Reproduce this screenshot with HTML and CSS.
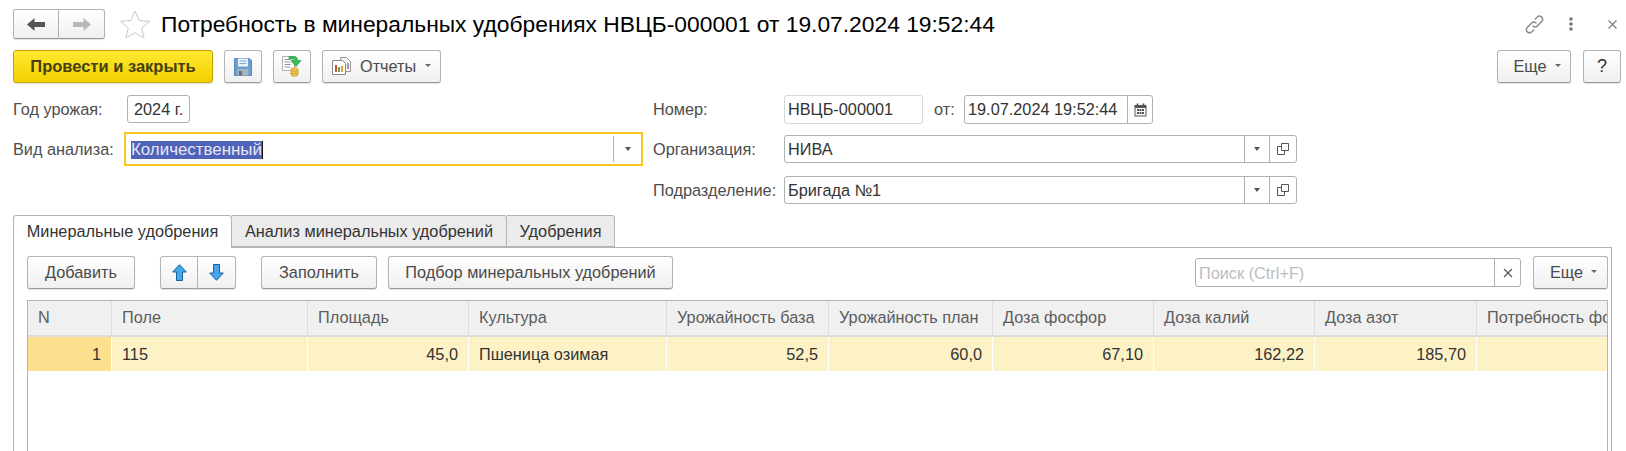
FILE: index.html
```html
<!DOCTYPE html>
<html lang="ru">
<head>
<meta charset="utf-8">
<title>Потребность в минеральных удобрениях</title>
<link rel="stylesheet" href="styles.css">
</head>
<body>
<div class="page">
  <header class="titlebar">
    <div class="btn-group nav">
      <button class="btn seg"><svg width="18" height="13" viewBox="0 0 18 13"><path d="M0 6.500L7.500 0v4H18v5H7.500v4z" fill="#555"/></svg></button>
      <button class="btn seg"><svg width="18" height="13" viewBox="0 0 18 13"><path d="M18 6.500L10.500 0v4H0v5h10.500v4z" fill="#b8b8b8"/></svg></button>
    </div>
    <svg class="star" width="30" height="28" viewBox="0 0 30 28"><path d="M15 1l4.200 9.500 10.300 .9-7.800 6.700 2.400 9.900L15 22.800 5.900 28l2.400-9.900L.5 11.400l10.300-.9z" fill="#fff" stroke="#c8c8c8"/></svg>
    <h1 class="title">Потребность в минеральных удобрениях НВЦБ-000001 от 19.07.2024 19:52:44</h1>
    <div class="win-tools">
      <svg class="tool-link" width="19" height="19" viewBox="0 0 19 19"><g fill="none" stroke="#8a8a8a" stroke-width="1.500" stroke-linecap="round"><path d="M8 11c1.500 1.500 3.200 1.200 4.300 0l4.200-4.200c1.600-1.600 1.500-3.500.2-4.700-1.300-1.200-3.200-1.300-4.600 .1L10.300 4"/><path d="M11 8c-1.500-1.500-3.200-1.200-4.300 0l-4.200 4.200c-1.600 1.600-1.500 3.500-.2 4.700 1.300 1.200 3.200 1.300 4.600-.1L8.700 15"/></g></svg>
      <svg class="tool-dots" width="4" height="14" viewBox="0 0 4 14"><g fill="#777"><circle cx="2" cy="2" r="1.800"/><circle cx="2" cy="7" r="1.800"/><circle cx="2" cy="12" r="1.800"/></g></svg>
      <svg class="tool-x" width="9" height="9" viewBox="0 0 9 9"><path d="M.5 .5l8 8M8.500 .5l-8 8" stroke="#808080" stroke-width="1.300"/></svg>
    </div>
  </header>

  <div class="cmdbar">
    <button class="btn primary">Провести и закрыть</button>
    <button class="btn icon"><svg width="18" height="18" viewBox="0 0 18 18"><path d="M.5 .5h15l2 2v15H.5z" fill="#6d9fd3" stroke="#5a88b8"/><rect x="4" y=".5" width="10" height="8" fill="#eaf2fa"/><path d="M5.500 3h7M5.500 5.500h7" stroke="#86a8cc"/><rect x="3.500" y="11" width="11" height="6.500" fill="#aab4bf"/><rect x="5" y="13" width="3" height="4.500" fill="#5f6f80"/></svg></button>
    <button class="btn icon"><svg width="20" height="21" viewBox="0 0 20 21"><path d="M.5 .5h10l2 2v12H.5z" fill="#fff" stroke="#b0b0b0"/><path d="M2.500 3.500h6M2.500 6h6M2.500 8.500h6M2.500 11h6" stroke="#8c9aa8"/><rect x="9" y="12" width="7" height="8" rx="2" fill="#efc84e" stroke="#cfa42e"/><path d="M9 15h7M9 17.500h7" stroke="#cfa42e"/><path d="M7 .5h5c2.500 0 3.500 1.500 3.500 4H19l-5 6-5-6h3.500c0-1-.5-1.500-1.500-1.500H7z" fill="#36c05a" stroke="#239a42" stroke-width=".7"/></svg></button>
    <button class="btn reports"><svg width="19" height="18" viewBox="0 0 19 18"><path d="M8.500 .5h6l4 4v10h-10z" fill="#f0f0f0" stroke="#9a9a9a"/><path d="M.5 3.500h10l3 3v11H.5z" fill="#fff" stroke="#8a8a8a"/><rect x="3" y="8" width="2" height="7" fill="#d64a3c"/><rect x="6" y="10" width="2" height="5" fill="#55a850"/><rect x="9" y="9" width="2" height="6" fill="#e0a030"/><rect x="15" y="6" width="2" height="6" fill="#a0a0a0"/></svg><span>Отчеты</span><i class="caret"></i></button>
    <div class="cmd-right">
      <button class="btn more">Еще<i class="caret"></i></button>
      <button class="btn help">?</button>
    </div>
  </div>

  <section class="form">
    <div class="col-left">
      <div class="row row-year">
        <label class="lbl lbl-left">Год урожая:</label>
        <div class="field year">2024 г.</div>
      </div>
      <div class="row row-kind">
        <label class="lbl lbl-left">Вид анализа:</label>
        <div class="field focus"><span class="val"><span class="sel">Количественный</span></span><span class="fbtn"><i class="caret dark"></i></span></div>
      </div>
    </div>
    <div class="col-right">
      <div class="row row-num">
        <label class="lbl lbl-right">Номер:</label>
        <div class="field number">НВЦБ-000001</div>
        <label class="lbl lbl-from">от:</label>
        <div class="field date"><span class="val">19.07.2024 19:52:44</span><span class="fbtn"><svg width="13" height="14" viewBox="0 0 13 14"><path d="M.5 2h12v11.500H.5z" fill="#555"/><path d="M3.500 .5v3M9.500 .5v3" stroke="#555" stroke-width="1.800"/><path d="M1.500 5h10v7.500h-10z" fill="#fff"/><path d="M3 6h2v2H3zM5.500 6h2v2h-2zM8 6h2v2H8zM3 9h2v2H3zM5.500 9h2v2h-2zM8 9h2v2H8z" fill="#555"/></svg></span></div>
      </div>
      <div class="row row-org">
        <label class="lbl lbl-right">Организация:</label>
        <div class="field wide"><span class="val">НИВА</span><span class="fbtn"><i class="caret dark"></i></span><span class="fbtn"><svg width="12" height="12" viewBox="0 0 12 12"><path d="M4.500 .5h7v7h-7zM4.500 3.500h-4v8h7v-4" fill="none" stroke="#555"/></svg></span></div>
      </div>
      <div class="row row-dep">
        <label class="lbl lbl-right">Подразделение:</label>
        <div class="field wide"><span class="val">Бригада №1</span><span class="fbtn"><i class="caret dark"></i></span><span class="fbtn"><svg width="12" height="12" viewBox="0 0 12 12"><path d="M4.500 .5h7v7h-7zM4.500 3.500h-4v8h7v-4" fill="none" stroke="#555"/></svg></span></div>
      </div>
    </div>
  </section>

  <nav class="tabs">
    <div class="tab active t1">Минеральные удобрения</div>
    <div class="tab t2">Анализ минеральных удобрений</div>
    <div class="tab t3">Удобрения</div>
  </nav>

  <section class="panel">
    <div class="toolbar">
      <button class="btn add">Добавить</button>
      <div class="btn-group arrows">
        <button class="btn seg"><svg width="15" height="17" viewBox="0 0 15 17"><path d="M7.500 .7l6.800 7.300h-3.800v8.500h-6V8H.7z" fill="#45a8ee" stroke="#1d6098" stroke-linejoin="round"/></svg></button>
        <button class="btn seg"><svg width="15" height="17" viewBox="0 0 15 17"><path d="M7.500 16.300l6.800-7.300h-3.800V.5h-6V9H.7z" fill="#45a8ee" stroke="#1d6098" stroke-linejoin="round"/></svg></button>
      </div>
      <button class="btn fill">Заполнить</button>
      <button class="btn pick">Подбор минеральных удобрений</button>
      <div class="field search"><span class="val ph">Поиск (Ctrl+F)</span><span class="fbtn"><svg width="10" height="10" viewBox="0 0 10 10"><path d="M1 1l8 8M9 1l-8 8" stroke="#555" stroke-width="1.200"/></svg></span></div>
      <button class="btn more">Еще<i class="caret"></i></button>
    </div>
    <div class="table-wrap">
      <table class="grid">
        <colgroup>
          <col class="c1"><col class="c2"><col class="c3"><col class="c4"><col class="c5"><col class="c6"><col class="c7"><col class="c8"><col class="c9"><col class="c10">
        </colgroup>
        <thead>
          <tr><th>N</th><th>Поле</th><th>Площадь</th><th>Культура</th><th>Урожайность база</th><th>Урожайность план</th><th>Доза фосфор</th><th>Доза калий</th><th>Доза азот</th><th>Потребность фосфор</th></tr>
        </thead>
        <tbody>
          <tr><td class="num idx">1</td><td>115</td><td class="num">45,0</td><td>Пшеница озимая</td><td class="num">52,5</td><td class="num">60,0</td><td class="num">67,10</td><td class="num">162,22</td><td class="num">185,70</td><td></td></tr>
        </tbody>
      </table>
    </div>
  </section>
</div>
</body>
</html>
```
FILE: styles.css
```css
* { box-sizing: border-box; }
html, body { margin: 0; padding: 0; background: #fff; }
body { width: 1626px; height: 451px; overflow: hidden; font: 16.3px/18px "Liberation Sans", Arial, sans-serif; color: #333; }
.page { height: 451px; overflow: hidden; padding: 9px 5px 0 13px; }

.btn { display: inline-flex; align-items: center; justify-content: center; height: 33px; padding: 0 0 2px; font: inherit; color: #4a4a4a; background: linear-gradient(#fff, #f0f0f0); border: 1px solid #b4b4b4; border-bottom-color: #9a9a9a; border-radius: 3px; box-shadow: 0 1px 1px rgba(0,0,0,.12); }
.btn-group { display: flex; }
.btn-group .seg { padding: 0; border-radius: 0; }
.btn-group .seg:first-child { border-radius: 3px 0 0 3px; }
.btn-group .seg:last-child { border-radius: 0 3px 3px 0; border-left: 0; }
.caret { display: inline-block; width: 0; height: 0; margin-left: 8px; border: 3px solid transparent; border-top: 3px solid #666; border-bottom: 0; }
.caret.dark { margin: 0; border-width: 4px 3.500px 0; border-top-color: #555; }

.titlebar { display: flex; align-items: center; height: 30px; }
.nav .seg { width: 46px; height: 30px; }
.star { margin-left: 15px; }
.title { margin: 0 0 0 11px; font: 400 22.800px/30px "Liberation Sans", Arial, sans-serif; color: #000; white-space: nowrap; }
.win-tools { display: flex; align-items: center; margin-left: auto; margin-right: 4px; }
.tool-dots { margin-left: 25px; }
.tool-x { margin-left: 35px; }

.cmdbar { display: flex; gap: 11px; margin-top: 11px; }
.primary { width: 200px; font-weight: 700; font-size: 16.500px; color: #454014; background: linear-gradient(#ffe930, #f2d000); border-color: #c5a500; }
.icon { width: 38px; padding: 0; }
.reports { width: 119px; justify-content: flex-start; gap: 9px; padding-left: 9px; }
.reports .caret { margin-left: 0; }
.cmd-right { display: flex; gap: 12px; margin-left: auto; }
.more { width: 74px; padding-left: 6px; }
.help { width: 38px; font-size: 18px; color: #333; }

.form { display: flex; height: 120px; margin-top: 12px; }
.col-left { width: 630px; }
.col-right { margin-left: 10px; }
.row { display: flex; align-items: center; }
.lbl { color: #4d4d4d; white-space: nowrap; }
.lbl-left { width: 111px; }
.lbl-right { width: 131px; }
.lbl-from { width: 30px; margin-left: 11px; }
.field { display: flex; align-items: center; height: 29px; padding-left: 3px; background: #fff; border: 1px solid #b0b0b0; border-radius: 3px; white-space: nowrap; }
.val { flex: 1; min-width: 0; overflow: hidden; }
.fbtn { display: flex; align-items: center; justify-content: center; flex: none; width: 26px; height: 100%; border-left: 1px solid #b0b0b0; }
.year { width: 63px; height: 28px; margin-left: 3px; padding-left: 6px; }
.row-kind { margin-top: 9px; }
.focus { flex: 1; height: 34px; padding-left: 5px; border: 2px solid #fcc51f; border-radius: 0; }
.focus .fbtn { height: 26px; width: 28px; }
.sel { display: inline-block; font-size: 16.900px; background: #4f63b8; color: #e8e8f4; box-shadow: 1px 0 0 #111; }
.number { width: 139px; border-color: #d8d8d8; }
.date { width: 189px; }
.date .fbtn { width: 25px; }
.row-num .lbl, .row-dep .lbl, .row-year .lbl, .number, .date .val, .row-dep .val { padding-bottom: 1px; }
.row-org { margin-top: 11px; }
.row-dep { margin-top: 13px; }
.wide { width: 513px; height: 28px; }
.wide .fbtn { width: 25px; }
.wide .fbtn:last-child { width: 27px; }

.tabs { display: flex; height: 33px; }
.tab { height: 32px; padding-top: 6px; text-align: center; background: #ebebeb; border: 1px solid #b4b4b4; border-left: 0; border-radius: 0 3px 0 0; white-space: nowrap; }
.tab.active { position: relative; z-index: 1; height: 33px; background: #fff; border-left: 1px solid #b4b4b4; border-bottom: 0; border-radius: 3px 3px 0 0; }
.t1 { width: 219px; }
.t2 { width: 275px; }
.t3 { width: 108px; }

.panel { display: flex; flex-direction: column; width: 1599px; height: 205px; margin-top: -1px; padding: 8px 3px 0 13px; border: 1px solid #b4b4b4; border-bottom: 0; }
.toolbar { display: flex; align-items: center; flex: none; height: 33px; }
.add { width: 108px; }
.arrows { margin-left: 25px; }
.arrows .seg { width: 38px; }
.fill { width: 116px; margin-left: 25px; }
.pick { width: 285px; margin-left: 11px; }
.search { width: 326px; margin-left: auto; margin-right: 12px; padding-left: 3px; }
.ph { color: #bcbcbc; }
.toolbar .more { width: 75px; }
.table-wrap { flex: 1; min-height: 0; margin-top: 11px; overflow: hidden; border: 1px solid #b4b4b4; border-bottom: 0; }
.grid { width: 1638px; border-collapse: separate; border-spacing: 0; table-layout: fixed; }
.grid th, .grid td { height: 34px; padding: 0 10px 1px; font-weight: 400; text-align: left; white-space: nowrap; overflow: hidden; border-right: 1px solid #fff; }
.grid th { height: 36px; padding-bottom: 2px; color: #5c5c5c; background: #f0f0f0; border-right-color: #dcdcdc; border-bottom: 2px solid #dcdcdc; }
.grid td { background: #fdf1c6; color: #333; }
.grid td.num { text-align: right; }
.grid td.idx { background: #fde08e; }
.c1 { width: 84px; }
.c2 { width: 196px; }
.c3 { width: 161px; }
.c4 { width: 198px; }
.c5 { width: 162px; }
.c6 { width: 164px; }
.c7 { width: 161px; }
.c8 { width: 161px; }
.c9 { width: 162px; }
.c10 { width: 189px; }
```
